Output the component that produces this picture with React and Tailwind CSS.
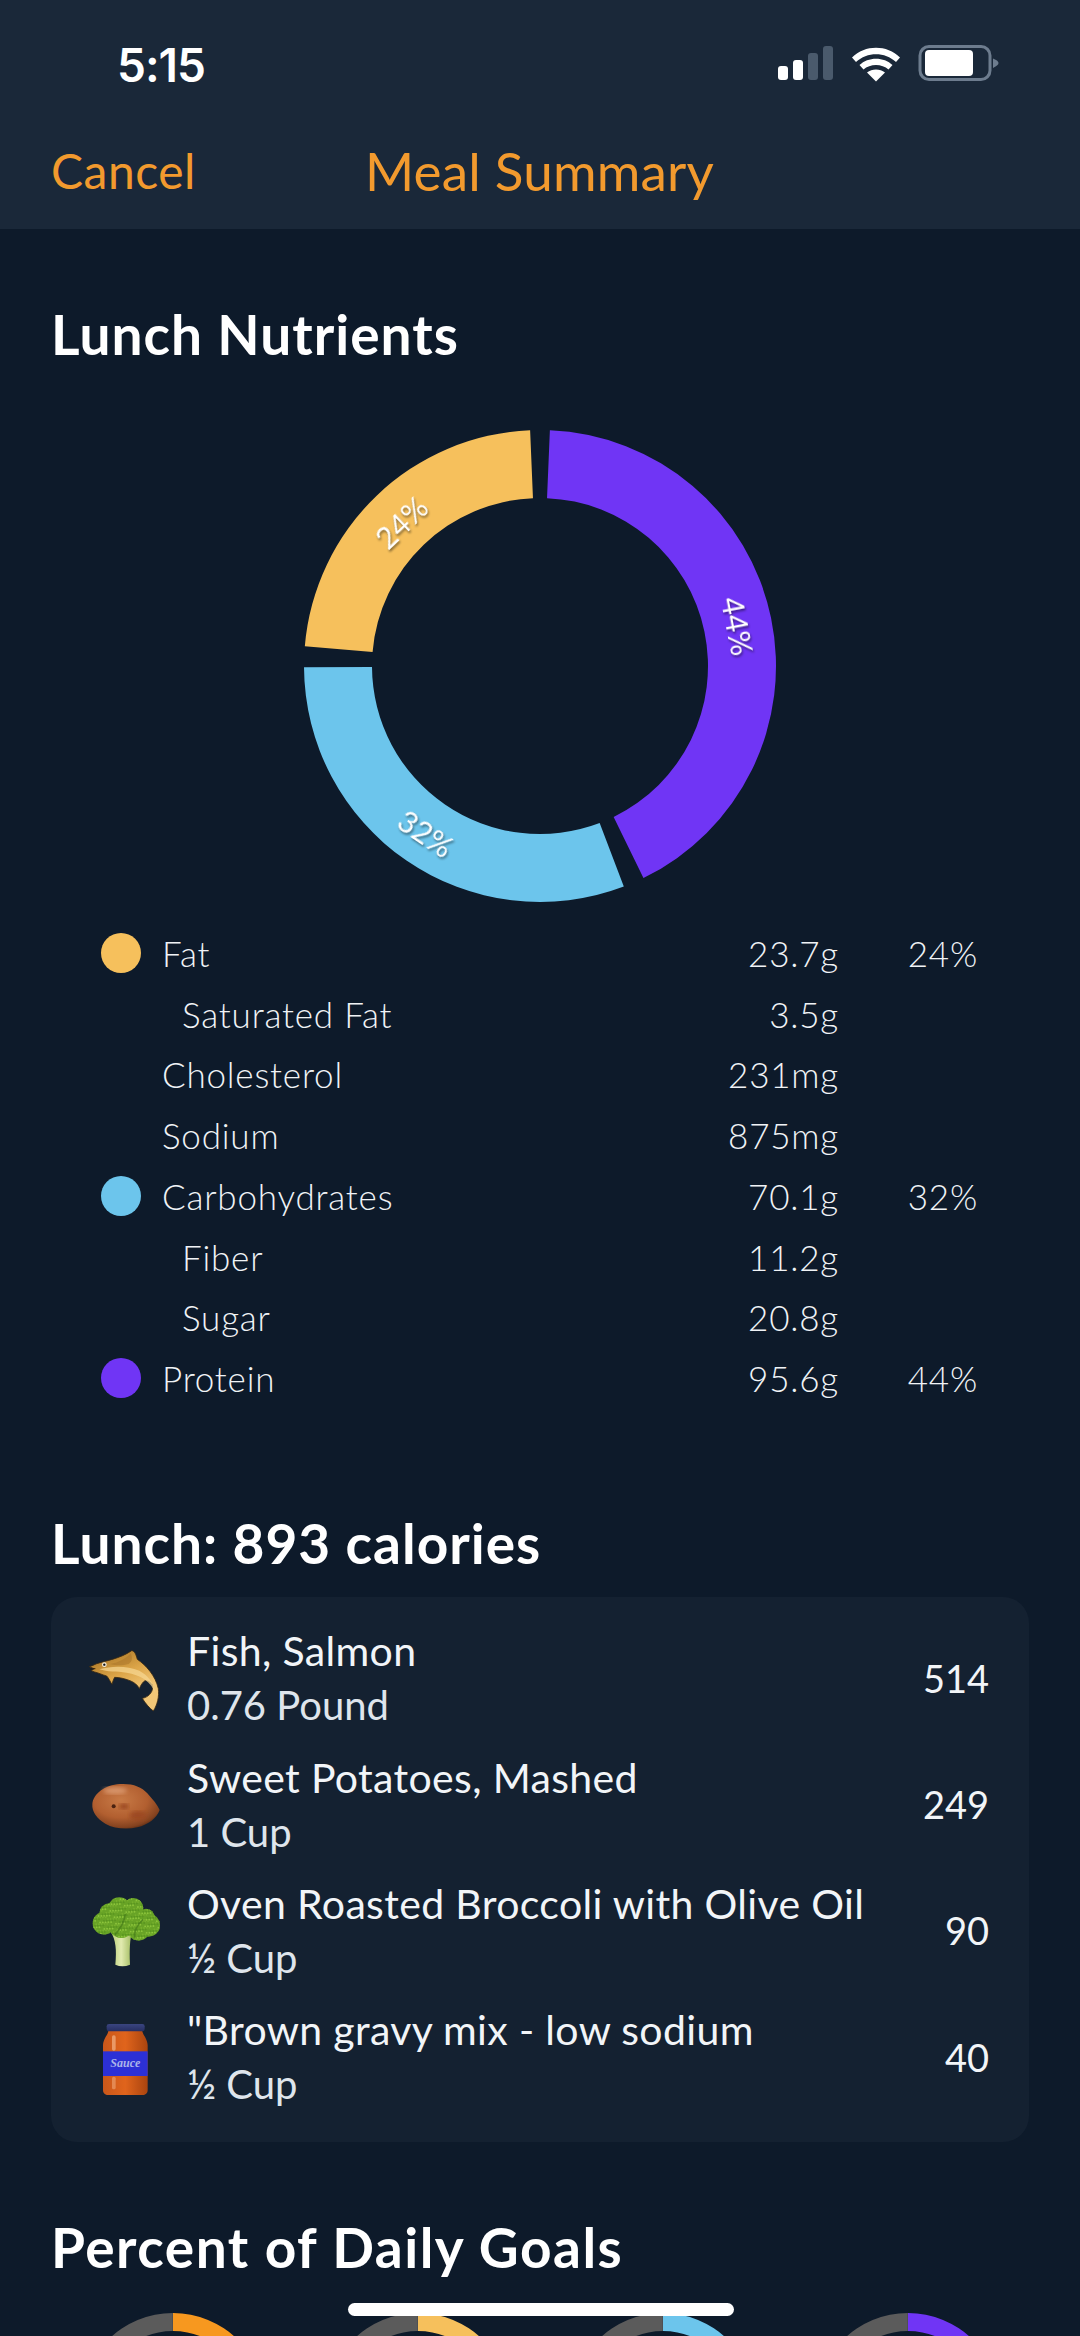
import React from 'react';

const polar = (r, deg) => {
  const a = ((deg - 90) * Math.PI) / 180;
  return [240 + r * Math.cos(a), 240 + r * Math.sin(a)];
};

// ring slice, angles clockwise from the top
const slice = (from, to, outer = 236, inner = 168) => {
  const [x1, y1] = polar(outer, from);
  const [x2, y2] = polar(outer, to);
  const [x3, y3] = polar(inner, to);
  const [x4, y4] = polar(inner, from);
  const large = to - from > 180 ? 1 : 0;
  return `M${x1} ${y1}A${outer} ${outer} 0 ${large} 1 ${x2} ${y2}L${x3} ${y3}A${inner} ${inner} 0 ${large} 0 ${x4} ${y4}Z`;
};

const legend = [
  { name: 'Fat', amount: '23.7g', pct: '24%', dot: 'bg-[#f6c05c]' },
  { name: 'Saturated Fat', amount: '3.5g', sub: true },
  { name: 'Cholesterol', amount: '231mg' },
  { name: 'Sodium', amount: '875mg' },
  { name: 'Carbohydrates', amount: '70.1g', pct: '32%', dot: 'bg-[#6cc5ec]' },
  { name: 'Fiber', amount: '11.2g', sub: true },
  { name: 'Sugar', amount: '20.8g', sub: true },
  { name: 'Protein', amount: '95.6g', pct: '44%', dot: 'bg-[#7035f5]' },
];

const StatusIcons = () => (
  <svg width="224" height="40" viewBox="0 0 224 40" className="block">
    <rect x="0" y="21" width="10" height="14" rx="3" fill="#fff" />
    <rect x="15" y="15" width="10" height="20" rx="3" fill="#fff" />
    <rect x="30" y="8" width="10" height="27" rx="3" fill="#4a5a6c" />
    <rect x="45" y="1" width="10" height="34" rx="3" fill="#4a5a6c" />
    <path d="M74 12.5C87 -0.5 109 -0.5 122 12.5L118 17C107 6.5 89 6.5 78 17Z" fill="#fff" />
    <path d="M81.5 20C90 11.5 106 11.5 114.5 20L110.5 24.5C104 18.5 92 18.5 85.5 24.5Z" fill="#fff" />
    <path d="M89 27.5C94 23.5 102 23.5 107 27.5L98 36.5Z" fill="#fff" />
    <rect x="142" y="1.5" width="70" height="33" rx="9" fill="none" stroke="#6d7c8e" strokeWidth="3" />
    <rect x="147" y="5" width="48" height="26" rx="4" fill="#fff" />
    <path d="M215 13.5C219 15 220.500 16.500 220.500 18C220.500 19.500 219 21 215 23Z" fill="#6d7c8e" />
  </svg>
);

const Fish = () => (
  <svg width="90" height="80" viewBox="0 0 270 240">
    <defs>
      <linearGradient id="fishBody" x1="0.35" y1="0.1" x2="0.65" y2="0.7">
        <stop offset="0" stopColor="#b98430" />
        <stop offset="0.45" stopColor="#dca548" />
        <stop offset="1" stopColor="#f2c777" />
      </linearGradient>
    </defs>
    <path
      d="M28 80C36 78 42 74 50 71C78 62 120 56 155 32C164 32 168 44 172 58C198 76 226 106 235 146C238 170 232 194 220 213C208 204 196 190 187 175C204 172 218 158 218 142C218 130 206 122 195 122C188 126 182 136 178 146C172 134 164 128 150 122C134 116 118 112 104 112C100 118 98 126 96 133C90 124 86 114 80 108C66 104 54 98 44 96L34 92L42 86Z"
      fill="url(#fishBody)"
      stroke="#3a2a14"
      strokeWidth="2.500"
    />
    <path d="M58 88C92 78 140 76 178 92C204 106 222 130 226 160C214 124 180 104 140 98C110 94 82 96 58 88Z" fill="#f6d690" opacity="0.75" />
    <path d="M152 40C158 52 158 64 146 72C126 78 104 76 90 72C116 68 138 56 152 40Z" fill="#a9742a" opacity="0.55" />
    <circle cx="73" cy="74" r="7" fill="#f6f0e0" />
    <circle cx="73" cy="74" r="3.500" fill="#111" />
    <path d="M30 87L46 86" stroke="#2a1c0c" strokeWidth="3" />
  </svg>
);

const Potato = () => (
  <svg width="90" height="65" viewBox="0 0 270 195">
    <defs>
      <radialGradient id="potatoSkin" cx="0.42" cy="0.36" r="0.72">
        <stop offset="0" stopColor="#c87a46" />
        <stop offset="0.55" stopColor="#b25f30" />
        <stop offset="0.85" stopColor="#84421f" />
        <stop offset="1" stopColor="#43200f" />
      </radialGradient>
      <filter id="potatoBlur">
        <feGaussianBlur stdDeviation="6" />
      </filter>
    </defs>
    <path
      d="M37 90C40 60 74 32 120 30C158 28 184 38 202 58C218 76 232 92 239 108C230 132 206 152 172 160C140 167 102 164 76 149C52 135 35 114 37 90Z"
      fill="url(#potatoSkin)"
    />
    <ellipse cx="132" cy="97" rx="14" ry="8" fill="#96431c" filter="url(#potatoBlur)" />
    <ellipse cx="175" cy="125" rx="26" ry="14" fill="#9c4a24" filter="url(#potatoBlur)" />
    <ellipse cx="105" cy="50" rx="36" ry="10" fill="#e2a47c" opacity="0.75" filter="url(#potatoBlur)" />
    <circle cx="101" cy="97" r="6" fill="#4a2210" />
  </svg>
);

// fixed speckle for the florets, golden ratio steps so it does not line up in rows
const specks = Array.from({ length: 460 }, (_, i) => ({
  x: 34 + ((i * 0.618034) % 1) * 210,
  y: 20 + ((i * 0.754878) % 1) * 132,
  tone: i % 3,
}));

const floretShapes = [
  [72, 100, 34],
  [88, 70, 30],
  [118, 56, 34],
  [160, 54, 30],
  [198, 82, 26],
  [206, 106, 34],
  [176, 118, 34],
  [124, 106, 38],
  [146, 84, 34],
];

const Broccoli = () => (
  <svg width="90" height="85" viewBox="0 0 270 255">
    <defs>
      <linearGradient id="stalk" x1="0" y1="0" x2="1" y2="0">
        <stop offset="0" stopColor="#b5cb74" />
        <stop offset="0.5" stopColor="#e2ebb0" />
        <stop offset="1" stopColor="#a3bc62" />
      </linearGradient>
      <clipPath id="florets">
        {floretShapes.map(([cx, cy, r]) => (
          <circle key={cx} cx={cx} cy={cy} r={r} />
        ))}
      </clipPath>
    </defs>
    <path d="M92 125L155 130C150 150 148 175 150 224C135 230 120 230 106 224C110 180 108 150 92 125Z" fill="url(#stalk)" />
    <g fill="#68a326">
      {floretShapes.map(([cx, cy, r]) => (
        <circle key={cx} cx={cx} cy={cy} r={r} />
      ))}
    </g>
    <g clipPath="url(#florets)">
      {specks.map((s, i) => (
        <circle key={i} cx={s.x} cy={s.y} r="2.800" fill={['#8cc43c', '#5a9620', '#77b02e'][s.tone]} />
      ))}
      <path d="M104 136C120 114 132 100 136 72M164 146C162 124 170 104 190 88" stroke="#3f7518" strokeWidth="5" fill="none" opacity="0.6" />
    </g>
  </svg>
);

const Jar = () => (
  <svg width="70" height="85" viewBox="0 0 210 255">
    <defs>
      <linearGradient id="jarBody" x1="0" y1="0" x2="1" y2="0">
        <stop offset="0" stopColor="#c9571a" />
        <stop offset="0.5" stopColor="#e0641c" />
        <stop offset="1" stopColor="#a9440f" />
      </linearGradient>
      <linearGradient id="jarLid" x1="0" y1="0" x2="0" y2="1">
        <stop offset="0" stopColor="#3a4580" />
        <stop offset="1" stopColor="#262e62" />
      </linearGradient>
    </defs>
    <path d="M56 42C54 58 40 66 39 88L39 222C39 232 46 237 54 237L158 237C166 237 173 232 173 222L173 88C172 66 158 58 156 42Z" fill="url(#jarBody)" />
    <rect x="50" y="24" width="114" height="22" rx="7" fill="url(#jarLid)" />
    <rect x="39" y="106" width="134" height="74" fill="#2c30d6" />
    <rect x="66" y="58" width="11" height="46" rx="5" fill="#f0ad80" opacity="0.75" />
    <rect x="66" y="182" width="11" height="38" rx="5" fill="#f0ad80" opacity="0.55" />
    <text x="106" y="152" textAnchor="middle" fontSize="36" fontStyle="italic" fontWeight="700" fill="#aab4ea" fontFamily="'Liberation Serif', serif">
      Sauce
    </text>
  </svg>
);

const foods = [
  { name: 'Fish, Salmon', qty: '0.76 Pound', cal: 514, Icon: Fish },
  { name: 'Sweet Potatoes, Mashed', qty: '1 Cup', cal: 249, Icon: Potato },
  { name: 'Oven Roasted Broccoli with Olive Oil', qty: '½ Cup', cal: 90, Icon: Broccoli },
  { name: '"Brown gravy mix - low sodium', qty: '½ Cup', cal: 40, Icon: Jar },
];

const goals = ['#f7981f', '#f6c05c', '#6cc5ec', '#7035f5'];

const GoalRing = ({ color }) => {
  const ring = (from, to) => {
    const p = (deg, r) => {
      const a = ((deg - 90) * Math.PI) / 180;
      return [92 + r * Math.cos(a), 92 + r * Math.sin(a)];
    };
    const [x1, y1] = p(from, 92);
    const [x2, y2] = p(to, 92);
    const [x3, y3] = p(to, 74);
    const [x4, y4] = p(from, 74);
    return `M${x1} ${y1}A92 92 0 0 1 ${x2} ${y2}L${x3} ${y3}A74 74 0 0 0 ${x4} ${y4}Z`;
  };
  return (
    <svg width="184" height="184" viewBox="0 0 184 184" className="mx-auto block">
      <path d={ring(0, 179)} fill={color} />
      <path d={ring(180, 359.900)} fill="#5b5b5b" />
    </svg>
  );
};

export default function App() {
  return (
    <div className="relative h-[2336px] w-[1080px] overflow-hidden bg-[#0d1a2a] font-['Lato','Noto_Sans',sans-serif] text-white">
      <header className="h-[229px] bg-[#1a2839]">
        <div className="flex h-[130px] items-center justify-between pl-[117px] pr-[78px]">
          <span className="font-['Inter',sans-serif] text-[46px] font-semibold tracking-[-1px]">5:15</span>
          <StatusIcons />
        </div>
        <div className="flex h-[81px] items-center pl-[51px] text-[#f29a2e]">
          <span className="w-[314px] text-[48px] tracking-[0.5px]">Cancel</span>
          <span className="text-[53px] tracking-[0.2px]">Meal Summary</span>
        </div>
      </header>

      <main>
        <h2 className="mt-[75px] pl-[51px] text-[55px] leading-[60px] font-bold tracking-[1px]">Lunch Nutrients</h2>

        <svg width="480" height="480" viewBox="0 0 480 480" className="mx-auto mt-[62px] block">
          <path d={slice(2.4, 154)} fill="#7035f5" />
          <path d={slice(159.200, 269.700)} fill="#6cc5ec" />
          <path d={slice(274.800, 357.600)} fill="#f6c05c" />
          <g fill="#fff" fontSize="30" textAnchor="middle" dominantBaseline="central" className="drop-shadow-[1px_2px_1px_rgba(0,0,0,0.45)]">
            <text transform="translate(438 200) rotate(79)">44%</text>
            <text transform="translate(126 407) rotate(34)">32%</text>
            <text transform="translate(101 96) rotate(-44)">24%</text>
          </g>
        </svg>

        <ul className="mt-[17px] pr-[102px] text-[35px] font-light tracking-[0.8px] text-[#f0f3f6]">
          {legend.map((row) => (
            <li key={row.name} className="flex h-[60.700px] items-center">
              <span className="flex w-[162px] justify-end pr-[21px]">
                {row.dot && <span className={`h-10 w-10 rounded-full ${row.dot}`} />}
              </span>
              <span className={row.sub ? 'flex-1 pl-5' : 'flex-1'}>{row.name}</span>
              <span className="w-[240px] text-right">{row.amount}</span>
              <span className="w-[139px] text-right">{row.pct}</span>
            </li>
          ))}
        </ul>

        <h2 className="mt-[104px] pl-[51px] text-[55px] leading-[60px] font-bold tracking-[1px]">Lunch: 893 calories</h2>

        <section className="mx-[51px] mt-6 rounded-[26px] bg-[#142131] py-5 pl-[29px] pr-[40px]">
          {foods.map(({ name, qty, cal, Icon }) => (
            <div key={name} className="flex h-[126.400px] items-center">
              <span className="flex w-[90px] justify-center">
                <Icon />
              </span>
              <div className="ml-[17px] flex-1 pb-[3px] text-[40px] leading-[55px] text-[#f2f5f8]">
                <div className="text-[41px] tracking-[0.35px]">{name}</div>
                <div className="text-[#dfe5ec]">{qty}</div>
              </div>
              <span className="pb-[3px] text-[38px] text-[#f2f5f8]">{cal}</span>
            </div>
          ))}
        </section>

        <h2 className="mt-[75px] pl-[51px] text-[55px] leading-[60px] font-bold tracking-[1.5px]">Percent of Daily Goals</h2>

        <div className="mx-[50px] mt-9 grid grid-cols-4">
          {goals.map((c) => (
            <GoalRing key={c} color={c} />
          ))}
        </div>
      </main>

      {/* home indicator sits over the scrolled content */}
      <div className="absolute left-[348px] top-[2303px] h-[13px] w-[386px] rounded-full bg-white" />
    </div>
  );
}
